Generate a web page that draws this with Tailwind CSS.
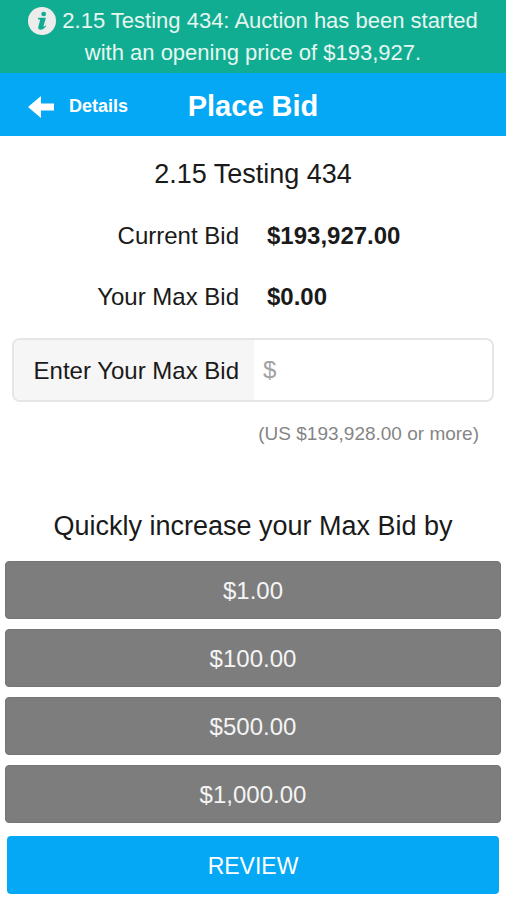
<!DOCTYPE html>
<html lang="en">
<head>
<meta charset="utf-8">
<meta name="viewport" content="width=device-width, initial-scale=1">
<title>Place Bid</title>
<script src="https://cdn.jsdelivr.net/npm/@tailwindcss/browser@4"></script>
</head>
<body class="min-h-screen bg-white font-['Liberation_Sans',Arial,sans-serif] text-[24px] text-[#1a1a1a]">
  <div role="status" class="bg-[#11ad92] px-6 pt-[5px] pb-1 text-center text-[22px] leading-8 text-[#e6f6f0]">
    <svg class="inline-block size-7 align-[-7px]" viewBox="0 0 28 28" aria-hidden="true">
      <circle cx="14" cy="14" r="14" fill="#ececec"/>
      <ellipse cx="15.7" cy="7" rx="2.400" ry="2.200" fill="#11ad92"/>
      <path d="M10.300 10.800h7.600l-2.300 8.300c-.2.9.5.8 1.900-.7l.8.7c-1.700 2.400-3.700 3.600-5.700 3.600-2 0-2.700-1.200-2.300-2.900l1.700-6.200c.2-.8 0-1.100-.8-1.100h-1.300z" fill="#11ad92"/>
    </svg>
    2.15 Testing 434: Auction has been started with an opening price of $193,927.
  </div>

  <header class="grid h-[63px] grid-cols-[1fr_auto_1fr] items-center bg-[#05a8f5] px-7 pt-1 text-white">
    <a href="#details" class="flex items-center gap-[15px] text-[18px] font-bold">
      <svg class="h-[22px] w-[26px]" viewBox="0 0 26 22" fill="currentColor" aria-hidden="true">
        <path d="M0 11L13 0V7.500H26V14.500H13V22Z"/>
      </svg>
      Details
    </a>
    <h1 class="text-[29px] font-bold">Place Bid</h1>
  </header>

  <main>
    <h2 class="pt-5 text-center text-[27px] leading-9">2.15 Testing 434</h2>
    <dl class="mt-[13px] grid grid-cols-[239px_1fr] gap-x-7 leading-[61px]">
      <dt class="text-right">Current Bid</dt>
      <dd class="font-bold">$193,927.00</dd>
      <dt class="text-right">Your Max Bid</dt>
      <dd class="font-bold">$0.00</dd>
    </dl>

    <form>
      <div class="mx-3 mt-[11px] flex h-16 overflow-hidden rounded-lg border-2 border-[#e6e6e6]">
        <label for="max-bid" class="flex w-[240px] shrink-0 items-center justify-end bg-[#f6f6f6] pt-[2px] pr-[15px]">Enter Your Max Bid</label>
        <input id="max-bid" type="text" inputmode="decimal" placeholder="$" aria-describedby="minimum" class="min-w-0 flex-1 px-[9px] outline-none placeholder:text-[#a3a3a3]">
      </div>
      <p id="minimum" class="mt-5 pr-[27px] text-right text-[19px] leading-6 text-[#858585]">(US $193,928.00 or more)</p>

      <h3 class="mt-[62px] text-center text-[27px] leading-9">Quickly increase your Max Bid by</h3>
      <div class="mt-[17px] flex flex-col gap-[10px] px-[5px] text-[#f4f4f4]">
        <button type="button" class="h-[58px] rounded-sm border border-[#747474] bg-[#7d7d7d] pt-[2px]">$1.00</button>
        <button type="button" class="h-[58px] rounded-sm border border-[#747474] bg-[#7d7d7d] pt-[2px]">$100.00</button>
        <button type="button" class="h-[58px] rounded-sm border border-[#747474] bg-[#7d7d7d] pt-[2px]">$500.00</button>
        <button type="button" class="h-[58px] rounded-sm border border-[#747474] bg-[#7d7d7d] pt-[2px]">$1,000.00</button>
      </div>
      <div class="flex px-[7px] pt-[13px] pb-[6px]">
        <button type="submit" class="h-[58px] flex-1 rounded-sm bg-[#05a8f5] pt-[2px] text-[23px] text-white">REVIEW</button>
      </div>
    </form>
  </main>
</body>
</html>
